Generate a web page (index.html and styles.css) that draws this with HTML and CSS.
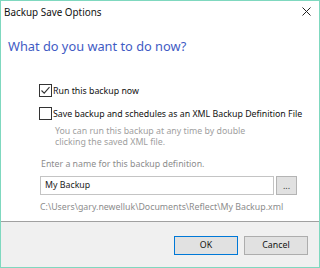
FILE: index.html
```html
<!DOCTYPE html>
<html>
<head>
    <title>Backup Save Options</title>
    <link rel="stylesheet" href="styles.css">
</head>
<body>
    <div class="dialog">
        <div class="titlebar">
            <span class="title">Backup Save Options</span>
            <svg class="close" width="9" height="9" viewBox="0 0 9 9">
                <path d="M0.5 0.5 L8.5 8.5 M8.5 0.5 L0.5 8.5" stroke="#222" stroke-width="1"/>
            </svg>
        </div>
        <div class="content">
            <h1 class="heading">What do you want to do now?</h1>
            <div class="options">
                <label class="check">
                    <span class="box">
                        <svg width="11" height="11" viewBox="0 0 11 11">
                            <path d="M1.5 5.5 L4.2 8.2 L9.5 2.2" fill="none" stroke="#333" stroke-width="1.1"/>
                        </svg>
                    </span>
                    Run this backup now
                </label>
                <label class="check second">
                    <span class="box"></span>
                    Save backup and schedules as an XML Backup Definition File
                </label>
                <p class="desc">You can run this backup at any time by double<br>clicking the saved XML file.</p>
                <p class="hint">Enter a name for this backup definition.</p>
                <div class="name-row">
                    <div class="input">My Backup</div>
                    <div class="browse">...</div>
                </div>
                <p class="path">C:\Users\gary.newelluk\Documents\Reflect\My Backup.xml</p>
            </div>
        </div>
        <div class="footer">
            <div class="btn default">OK</div>
            <div class="btn">Cancel</div>
        </div>
    </div>
</body>
</html>
```

FILE: styles.css
```css
html, body {
    padding: 0;
    margin: 0;
    font-family: "Noto Sans", "Open Sans", sans-serif;
}
.dialog {
    width: 320px;
    height: 268px;
    box-sizing: border-box;
    border: 1px solid #7fd8bf;
    background: white;
    display: flex;
    flex-direction: column;
}
.titlebar {
    height: 21px;
    flex-shrink: 0;
    display: flex;
    align-items: center;
    justify-content: space-between;
    padding: 0 8px 0 3px;
}
.title {
    font-size: 9.9px;
    color: #111;
}
.content {
    flex: 1;
}
.heading {
    margin: 15px 0 0 7px;
    font-weight: normal;
    font-size: 12.8px;
    color: #3f5bc4;
    line-height: 18px;
}
.options {
    padding-left: 38px;
    margin-top: 29px;
}
.check {
    display: flex;
    align-items: center;
    font-size: 8.8px;
    color: #111;
    height: 13px;
}
.check.second {
    margin-top: 10px;
}
.box {
    width: 11px;
    height: 11px;
    border: 1px solid #333;
    margin-right: 1px;
    display: flex;
}
.desc {
    margin: 6px 0 0 16px;
    font-size: 8.8px;
    line-height: 11px;
    color: #a0a0a0;
}
.hint {
    margin: 10px 0 0 2px;
    font-size: 8.8px;
    line-height: 12px;
    color: #8c8c8c;
}
.name-row {
    display: flex;
    margin-top: 6px;
    margin-left: 1px;
    height: 19px;
}
.input {
    width: 234px;
    box-sizing: border-box;
    border: 1px solid #c4c4c4;
    padding-left: 4px;
    font-size: 8.8px;
    line-height: 17px;
    color: #222;
}
.browse {
    width: 21px;
    margin-left: 2px;
    box-sizing: border-box;
    border: 1px solid #b4b4b4;
    background: #e1e1e1;
    font-size: 8.8px;
    text-align: center;
    line-height: 19px;
    color: #333;
}
.path {
    margin: 6px 0 0 1px;
    font-size: 8.8px;
    line-height: 12px;
    color: #8c8c8c;
}
.footer {
    height: 46px;
    flex-shrink: 0;
    border-top: 1px solid #a0a0a0;
    background: #f0f0f0;
    display: flex;
    justify-content: flex-end;
    align-items: flex-start;
    gap: 6px;
    padding: 14px 11px 0 0;
    box-sizing: border-box;
}
.btn {
    width: 64px;
    height: 19px;
    box-sizing: border-box;
    border: 1px solid #adadad;
    background: #e1e1e1;
    font-size: 8.8px;
    text-align: center;
    line-height: 17px;
    color: #111;
}
.btn.default {
    border-color: #0078d7;
}
```
